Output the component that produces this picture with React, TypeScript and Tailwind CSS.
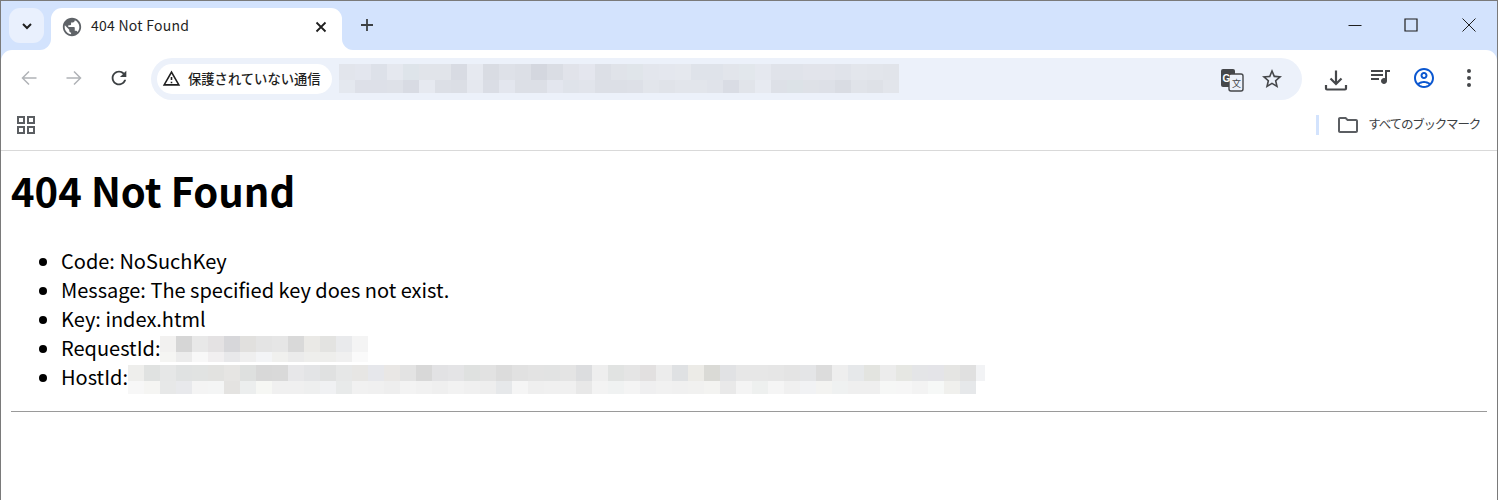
import React from 'react';

const urlRows = [
  ['e2e5ec','e3e6ee','dde1e9','e5e8ef','dee4ea','e1e4ea','e1e4ea','d8dbe3','e6e9f0','d9dce3','dee1e8','dcdfe6','d4d7df','dadde4','e1e3ea','e4e6ee','dcdfe6','e0e3e9','e0e5ea','e3e6ed','e4e7ee','e5e8ee','dfe3ea','dfe3ea','e2e5eb','e2e7ec','e5e8ef','e0e3ea','e0e3ea','e2e4eb','e2e4eb','e0e3ea','e3e6ec','e2e5eb','e1e4ea'],
  ['e4e8ef','dde0e8','dde0e8','dee1e8','d8dbe3','e6e9f0','dcdfe6','dbdee5','e5e8ef','dadde5','e3e6ee','dcdfe6','dcdfe6','e3e6ee','dfe3ea','e1e4eb','dcdfe6','dcdfe6','dde0e7','e2e5eb','e0e3e9','e2e5eb','e2e5eb','e0e3ea','d9dce4','e1e4ea','e7eaf1','dde0e7','dce2e7','dee1e7','dde0e7','d9dce3','e0e3e9','dee1e7','e2e5eb'],
];

const requestRows = [
  ['f2f1f0','d6d6d6','e8e8e8','e4e2e3','d7d7da','e1e0de','e4e4e4','e6e6e6','d9d9d9','eae9e6','e3e3e1','e9eaec','f4f4f4'],
  ['f5f5f3','ececec','f8f8f8','f1eff0','e8e8ea','efefef','f3f4f6','f0f0ee','ebebeb','eeeeec','eeeeec','f0f0f0','fafafa'],
];

const hostRows = [
  ['eeeeec','e0e2e1','e6e7e7','e0e2e2','e1e3e2','e2e2e0','e6e5e3','dee0df','d8d8d8','d9d9d9','e7e7e9','e3e4e6','e0e1e1','e6e7e7','e7e6e4','e6e7eb','e9e7e5','e3e3e3','d8d8d8','e2e2e4','e4e4e6','dfe1e0','e2e2e2','dcdcdc','e1e1e1','e3e3e3','e2e3e3','e4e4e4','dcdddf','eeeeee','e1e3e2','e5e5e5','e2e0e0','ececec','dfe1e3','ecebe7','dadad6','e1e2e4','e7e7e7','e7e7e7','e6e6e6','e4e4e4','e4e5e7','dcdcdc','eeeeee','e6e8ea','e3e4e0','ececec','e6e7e3','e4e5e7','e4e4e8','e5e5e3','e0e0e0'],
  ['f7f7f7','f5f5f3','e7e8e8','e8e9ec','f4f4f4','f4f5f5','e4e3e1','eceeee','f6f7f4','f0f0f0','f0f0f0','eeefef','f0f1f3','e8eaea','f1f1f1','f0f0f0','eeeeee','f3f3f3','f1f1f1','efefef','f2f2f2','f0f0f0','eeeeee','e6e8ea','f5f5f5','efefef','f0f0f0','f0f0f0','e8e8e8','f3f3f3','f0f2f2','f4f4f4','efeff0','f1f1f1','f0f0f0','f1f1f0','f3f3f1','e9e9e9','f4f4f4','eef0ef','f5f5f5','f0f0f0','f1f2f4','f3f3f1','eff1f1','efefef','efefef','f6f7f6','f6f6f6','f3f3f3','f6f8f7','f0f0ed','e6e8ea'],
];

type MosaicProps = {
  rows: string[][];
  tall: string;
  short: string;
  tail?: string;
};

const Mosaic = ({ rows, tall, short, tail }: MosaicProps) => (
  <div className="flex flex-col">
    {rows.map((row, i) => (
      <div key={i} className={`flex ${i === 0 ? tall : short}`}>
        {row.map((c, j) => (
          <div key={j} className="w-4 h-full" style={{ background: `#${c}` }} />
        ))}
        {tail && i === 0 && <div className="w-[9px] h-full" style={{ background: `#${tail}` }} />}
      </div>
    ))}
  </div>
);

const Icon = ({ d, className }: { d: string; className: string }) => (
  <svg viewBox="0 0 24 24" fill="currentColor" className={className}>
    <path d={d} />
  </svg>
);

const GLOBE = 'M12 2C6.48 2 2 6.48 2 12s4.48 10 10 10 10-4.48 10-10S17.52 2 12 2zm-1 17.93c-3.95-.49-7-3.85-7-7.93 0-.62.08-1.21.21-1.79L9 15v1c0 1.1.9 2 2 2v1.93zm6.9-2.54c-.26-.81-1-1.39-1.9-1.39h-1v-3c0-.55-.45-1-1-1H8v-2h2c.55 0 1-.45 1-1V7h2c1.1 0 2-.9 2-2v-.41c2.93 1.19 5 4.06 5 7.41 0 2.08-.8 3.97-2.1 5.39z';
const WARNING = 'M12 5.99L19.53 19H4.47L12 5.99M12 2L1 21h22L12 2zm1 14h-2v2h2v-2zm0-6h-2v4h2v-4z';
const REFRESH = 'M17.65 6.35C16.2 4.9 14.21 4 12 4c-4.42 0-7.99 3.58-7.99 8s3.57 8 7.99 8c3.73 0 6.84-2.55 7.73-6h-2.08c-.82 2.33-3.04 4-5.65 4-3.31 0-6-2.69-6-6s2.69-6 6-6c1.66 0 3.14.69 4.22 1.78L13 11h7V4l-2.35 2.35z';
const STAR = 'M22 9.24l-7.19-.62L12 2 9.19 8.63 2 9.24l5.46 4.73L5.82 21 12 17.27 18.18 21l-1.63-7.03L22 9.24zM12 15.4l-3.76 2.27 1-4.28-3.32-2.88 4.38-.38L12 6.1l1.71 4.04 4.38.38-3.32 2.88 1 4.28L12 15.4z';
const QUEUE = 'M15 6H3v2h12V6zm0 4H3v2h12v-2zM3 16h8v-2H3v2zM17 6v8.18c-.31-.11-.65-.18-1-.18-1.66 0-3 1.34-3 3s1.34 3 3 3 3-1.34 3-3V8h3V6h-5z';
const ACCOUNT = 'M12 2C6.48 2 2 6.48 2 12s4.48 10 10 10 10-4.48 10-10S17.52 2 12 2zM7.35 18.5C8.66 17.56 10.26 17 12 17s3.34.56 4.65 1.5c-1.31.94-2.91 1.5-4.65 1.5s-3.34-.56-4.65-1.5zm10.79-1.38C16.45 15.8 14.32 15 12 15s-4.45.8-6.14 2.12C4.7 15.73 4 13.95 4 12c0-4.42 3.58-8 8-8s8 3.58 8 8c0 1.95-.7 3.73-1.86 5.12zM12 6c-1.93 0-3.5 1.57-3.5 3.5S10.07 13 12 13s3.5-1.57 3.5-3.5S13.93 6 12 6zm0 5c-.83 0-1.5-.67-1.5-1.5S11.17 8 12 8s1.5.67 1.5 1.5S12.83 11 12 11z';
const FOLDER = 'M20 6h-8l-2-2H4c-1.1 0-1.99.9-1.99 2L2 18c0 1.1.9 2 2 2h16c1.1 0 2-.9 2-2V8c0-1.1-.9-2-2-2zm0 12H4V6h5.17l2 2H20v10z';

const TabStrip = () => (
  <div className="h-[49px] bg-[#d3e3fd] flex items-start">
    <div className="mt-[7px] ml-[8px] w-[35px] h-[35px] rounded-[11px] bg-[#e9f0fd] flex items-center justify-center text-[#1f1f1f]">
      <svg viewBox="0 0 12 12" className="w-3 h-3" fill="none" stroke="currentColor" strokeWidth="2">
        <path d="M2 4l4 4 4-4" />
      </svg>
    </div>
    <div className="relative mt-[7px] ml-[7px] w-[291px] h-[42px] bg-white rounded-t-[11px] flex items-center pl-[10px]">
      <svg viewBox="0 0 11 11" className="absolute left-[-11px] bottom-0 w-[11px] h-[11px]">
        <path d="M11 0v11H0C6 11 11 6 11 0z" fill="#fff" />
      </svg>
      <svg viewBox="0 0 11 11" className="absolute right-[-11px] bottom-0 w-[11px] h-[11px]">
        <path d="M0 0v11h11C5 11 0 6 0 0z" fill="#fff" />
      </svg>
      <Icon d={GLOBE} className="w-[22px] h-[22px] text-[#5f6368] -mt-1" />
      <span className="ml-[8px] text-[14px] tracking-[0.25px] text-[#1f1f1f] font-['Noto_Sans_CJK_JP',sans-serif] -mt-2 flex-1">404 Not Found</span>
      <svg viewBox="0 0 12 12" className="w-3 h-3 mr-[15px] -mt-1" fill="none" stroke="#1f1f1f" strokeWidth="1.8">
        <path d="M1.5 1.5l9 9M10.5 1.5l-9 9" />
      </svg>
    </div>
    <svg viewBox="0 0 14 14" className="w-[14px] h-[14px] ml-[18px] mt-[17px]" fill="none" stroke="#3c4043" strokeWidth="1.8">
      <path d="M7 1v12M1 7h12" />
    </svg>
    <div className="ml-auto flex mt-[17px] text-[#1f1f1f]">
      <svg viewBox="0 0 14 14" className="w-[14px] h-[14px]" fill="none" stroke="currentColor" strokeWidth="1">
        <path d="M0.5 7.5h13" />
      </svg>
      <svg viewBox="0 0 14 14" className="w-[14px] h-[14px] ml-[42px]" fill="none" stroke="currentColor" strokeWidth="1.2">
        <path d="M1 1h12v12H1z" />
      </svg>
      <svg viewBox="0 0 14 14" className="w-[14px] h-[14px] ml-[44px] mr-[21px]" fill="none" stroke="currentColor" strokeWidth="1">
        <path d="M0.5 0.5l13 13M13.5 0.5l-13 13" />
      </svg>
    </div>
  </div>
);

const Toolbar = () => (
  <div className="h-[51px] bg-[#d3e3fd]">
    <div className="h-full bg-white rounded-t-[11px] flex items-center pl-[20px] pt-[6px]">
      <svg viewBox="0 0 16 16" className="w-4 h-4 -mt-[2px] text-[#b0b3b7]" fill="none" stroke="currentColor" strokeWidth="1.5">
        <path d="M15.5 8H1.5M8 1.5L1.5 8 8 14.5" />
      </svg>
      <svg viewBox="0 0 16 16" className="w-4 h-4 -mt-[2px] ml-[29px] text-[#b0b3b7]" fill="none" stroke="currentColor" strokeWidth="1.5">
        <path d="M0.5 8h14M8 1.5L14.5 8 8 14.5" />
      </svg>
      <Icon d={REFRESH} className="w-[22px] h-[22px] ml-[26px] text-[#3c4043] -mt-[2px]" />
      <div className="ml-[21px] w-[1151px] h-[42px] rounded-full bg-[#ecf1fa] flex items-center pl-[6px] pr-[18px]">
        <div className="h-[30px] w-[175px] rounded-full bg-white flex items-center pl-[5px]">
          <Icon d={WARNING} className="w-[19px] h-[19px] text-[#1f1f1f]" />
          <span className="ml-[7px] text-[13.3px] font-medium text-[#1f1f1f] font-['Noto_Sans_CJK_JP',sans-serif] whitespace-nowrap">保護されていない通信</span>
        </div>
        <div className="ml-[7px]">
          <Mosaic rows={urlRows} tall="h-4" short="h-[13px]" />
        </div>
        <div className="ml-auto flex items-center gap-[16px]">
          <svg viewBox="0 0 24 24" className="w-[24px] h-[24px] mt-[2px]">
            <rect x="1" y="1" width="14" height="18" rx="2" fill="#45474a" />
            <rect x="9" y="6" width="14" height="17" rx="2" fill="#ecf1fa" stroke="#45474a" strokeWidth="1.4" />
            <text x="2.500" y="14" fontSize="10" fontWeight="700" fill="#fff" fontFamily="Liberation Sans, sans-serif">G</text>
            <text x="12" y="19" fontSize="9" fill="#45474a" fontFamily="Noto Sans CJK JP, sans-serif">文</text>
          </svg>
          <Icon d={STAR} className="w-[24px] h-[24px] text-[#45474a]" />
        </div>
      </div>
      <svg viewBox="0 0 24 24" className="w-[24px] h-[24px] ml-[22px] mt-[2px] text-[#45474a]" fill="none" stroke="currentColor" strokeWidth="2.2">
        <path d="M12 2.5v13M6.5 10.5L12 16l5.500-5.500M2 17v3.500a1 1 0 001 1h18a1 1 0 001-1V17" />
      </svg>
      <Icon d={QUEUE} className="w-[24px] h-[24px] ml-[20px] -mt-[5px] text-[#45474a]" />
      <Icon d={ACCOUNT} className="w-[24px] h-[24px] ml-[20px] -mt-[1px] text-[#0b57d0]" />
      <svg viewBox="0 0 24 24" className="w-[24px] h-[24px] ml-[21px] -mt-[1px] text-[#45474a]" fill="currentColor">
        <circle cx="12" cy="5" r="2" />
        <circle cx="12" cy="12" r="2" />
        <circle cx="12" cy="19" r="2" />
      </svg>
    </div>
  </div>
);

const BookmarksBar = () => (
  <div className="h-[50px] border-b border-[#d9d9d9] bg-white flex items-center pl-[16px] pr-[17px]">
    <svg viewBox="0 0 18 18" className="w-[18px] h-[18px] -mt-[2px] text-[#5b5e62]" fill="none" stroke="currentColor" strokeWidth="2">
      <path d="M1 1h6v6H1zM11 1h6v6h-6zM1 11h6v6H1zM11 11h6v6h-6z" />
    </svg>
    <div className="ml-auto w-[3px] h-[20px] -mt-[2px] bg-[#d3e3fd]" />
    <Icon d={FOLDER} className="ml-[17px] w-[24px] h-[24px] -mt-[2px] text-[#5b5e62]" />
    <span className="ml-[8px] -mt-[2px] text-[12.5px] text-[#3c4043] font-['Noto_Sans_CJK_JP',sans-serif] tracking-[-1.2px] whitespace-nowrap">すべてのブックマーク</span>
  </div>
);

const Page = () => (
  <div className="px-[10px] font-['Noto_Sans_CJK_JP','Noto_Sans',sans-serif] text-black">
    <h1 className="text-[40px] font-bold leading-[58px] pt-[10px]">404 Not Found</h1>
    <ul className="list-disc pl-[50px] mt-[27px] text-[20px] leading-[29px]">
      <li>Code: NoSuchKey</li>
      <li>Message: The specified key does not exist.</li>
      <li>Key: index.html</li>
      <li>
        <div className="flex items-start h-[29px]">
          <span>RequestId:</span>
          <div className="mt-[3px]">
            <Mosaic rows={requestRows} tall="h-4" short="h-[10px]" />
          </div>
        </div>
      </li>
      <li>
        <div className="flex items-start h-[29px]">
          <span>HostId:</span>
          <div className="mt-[3px]">
            <Mosaic rows={hostRows} tall="h-4" short="h-[13px]" tail="f2f3f5" />
          </div>
        </div>
      </li>
    </ul>
    <hr className="mt-[20px] border-t border-[#9a9a9a]" />
  </div>
);

export default function App() {
  return (
    <div className="w-[1498px] h-[500px] overflow-hidden bg-white border border-b-0 border-[#7a7a7a] box-border">
      <TabStrip />
      <Toolbar />
      <BookmarksBar />
      <Page />
    </div>
  );
}
